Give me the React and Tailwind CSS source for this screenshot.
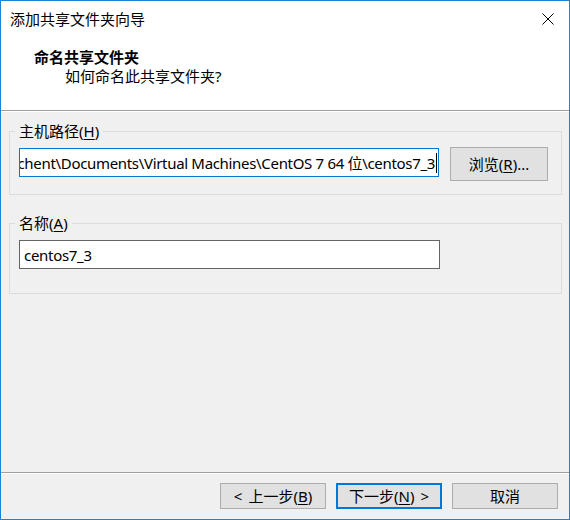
import React from 'react'

const font = "font-['Noto_Sans','Noto_Sans_CJK_SC',sans-serif]"

function Mnemonic({ before, letter, after }) {
  return (
    <>
      {before}(<span className="underline underline-offset-2">{letter}</span>){after}
    </>
  )
}

function GroupBox({ label, className, children }) {
  return (
    <div className={`relative ml-[8px] mr-[7px] border border-[#dcdcdc] ${className}`}>
      <span className="absolute left-[5px] top-[-11px] bg-[#f0f0f0] px-[4px] text-[15px] leading-[20px] text-black">
        {label}
      </span>
      {children}
    </div>
  )
}

function Button({ children, primary, className = '' }) {
  return (
    <button
      type="button"
      className={`flex items-center justify-center bg-[#e1e1e1] text-[15px] leading-[20px] text-black ${
        primary ? 'border-2 border-[#0078d7]' : 'border border-[#adadad]'
      } ${className}`}
    >
      {children}
    </button>
  )
}

export default function App() {
  return (
    <div className={`flex h-[520px] w-[570px] flex-col border border-[#1883d7] bg-[#f0f0f0] ${font}`}>
      {/* header */}
      <div className="relative h-[109px] shrink-0 bg-white">
        <div className="pl-[9px] pt-[8px] text-[15px] leading-[20px] text-black">添加共享文件夹向导</div>
        <svg className="absolute right-[15px] top-[12px]" width="12" height="12" viewBox="0 0 12 12">
          <path d="M0.5 0.5L11.5 11.5M11.5 0.5L0.5 11.5" stroke="#000" strokeWidth="1" />
        </svg>
        <div className="mt-[19px] pl-[33px] text-[15px] font-bold leading-[19px] text-black">命名共享文件夹</div>
        <div className="pl-[64px] text-[15px] leading-[19px] text-black">如何命名此共享文件夹?</div>
      </div>
      <div className="h-px shrink-0 bg-[#a0a0a0]" />
      <div className="h-px shrink-0 bg-white" />

      {/* body */}
      <div className="flex-1">
        <GroupBox label={<Mnemonic before="主机路径" letter="H" />} className="mt-[19px] h-[64px]">
          <div className="flex items-start pl-[9px] pt-[16px]">
            <div className="flex h-[29px] w-[420px] items-center justify-end overflow-hidden border border-[#0078d7] bg-white pr-[1px]">
              <span className="whitespace-nowrap text-[15px] leading-[20px] tracking-[-0.32px] text-black">
                C:\Users\chent\Documents\Virtual Machines\CentOS 7 64 位\centos7_3
              </span>
              <span className="ml-[1px] h-[20px] w-px shrink-0 bg-black" />
            </div>
            <Button className="ml-[11px] -mt-[1px] h-[34px] w-[98px]">
              <Mnemonic before="浏览" letter="R" after="..." />
            </Button>
          </div>
        </GroupBox>

        <GroupBox label={<Mnemonic before="名称" letter="A" />} className="mt-[28px] h-[71px]">
          <div className="pl-[9px] pt-[16px]">
            <div className="flex h-[29px] w-[421px] items-center border border-[#646464] bg-white pl-[4px]">
              <span className="whitespace-nowrap text-[15px] leading-[20px] tracking-[-0.3px] text-black">centos7_3</span>
            </div>
          </div>
        </GroupBox>
      </div>

      {/* footer */}
      <div className="h-px shrink-0 bg-[#a0a0a0]" />
      <div className="h-px shrink-0 bg-white" />
      <div className="flex h-[45px] shrink-0 justify-end gap-[10px] pr-[11px] pt-[9px]">
        <Button className="h-[26px] w-[106px]">
          &lt; <span className="ml-[6px]"><Mnemonic before="上一步" letter="B" /></span>
        </Button>
        <Button primary className="h-[26px] w-[106px]">
          <Mnemonic before="下一步" letter="N" />
          <span className="ml-[6px]">&gt;</span>
        </Button>
        <Button className="h-[26px] w-[106px]">取消</Button>
      </div>
    </div>
  )
}
